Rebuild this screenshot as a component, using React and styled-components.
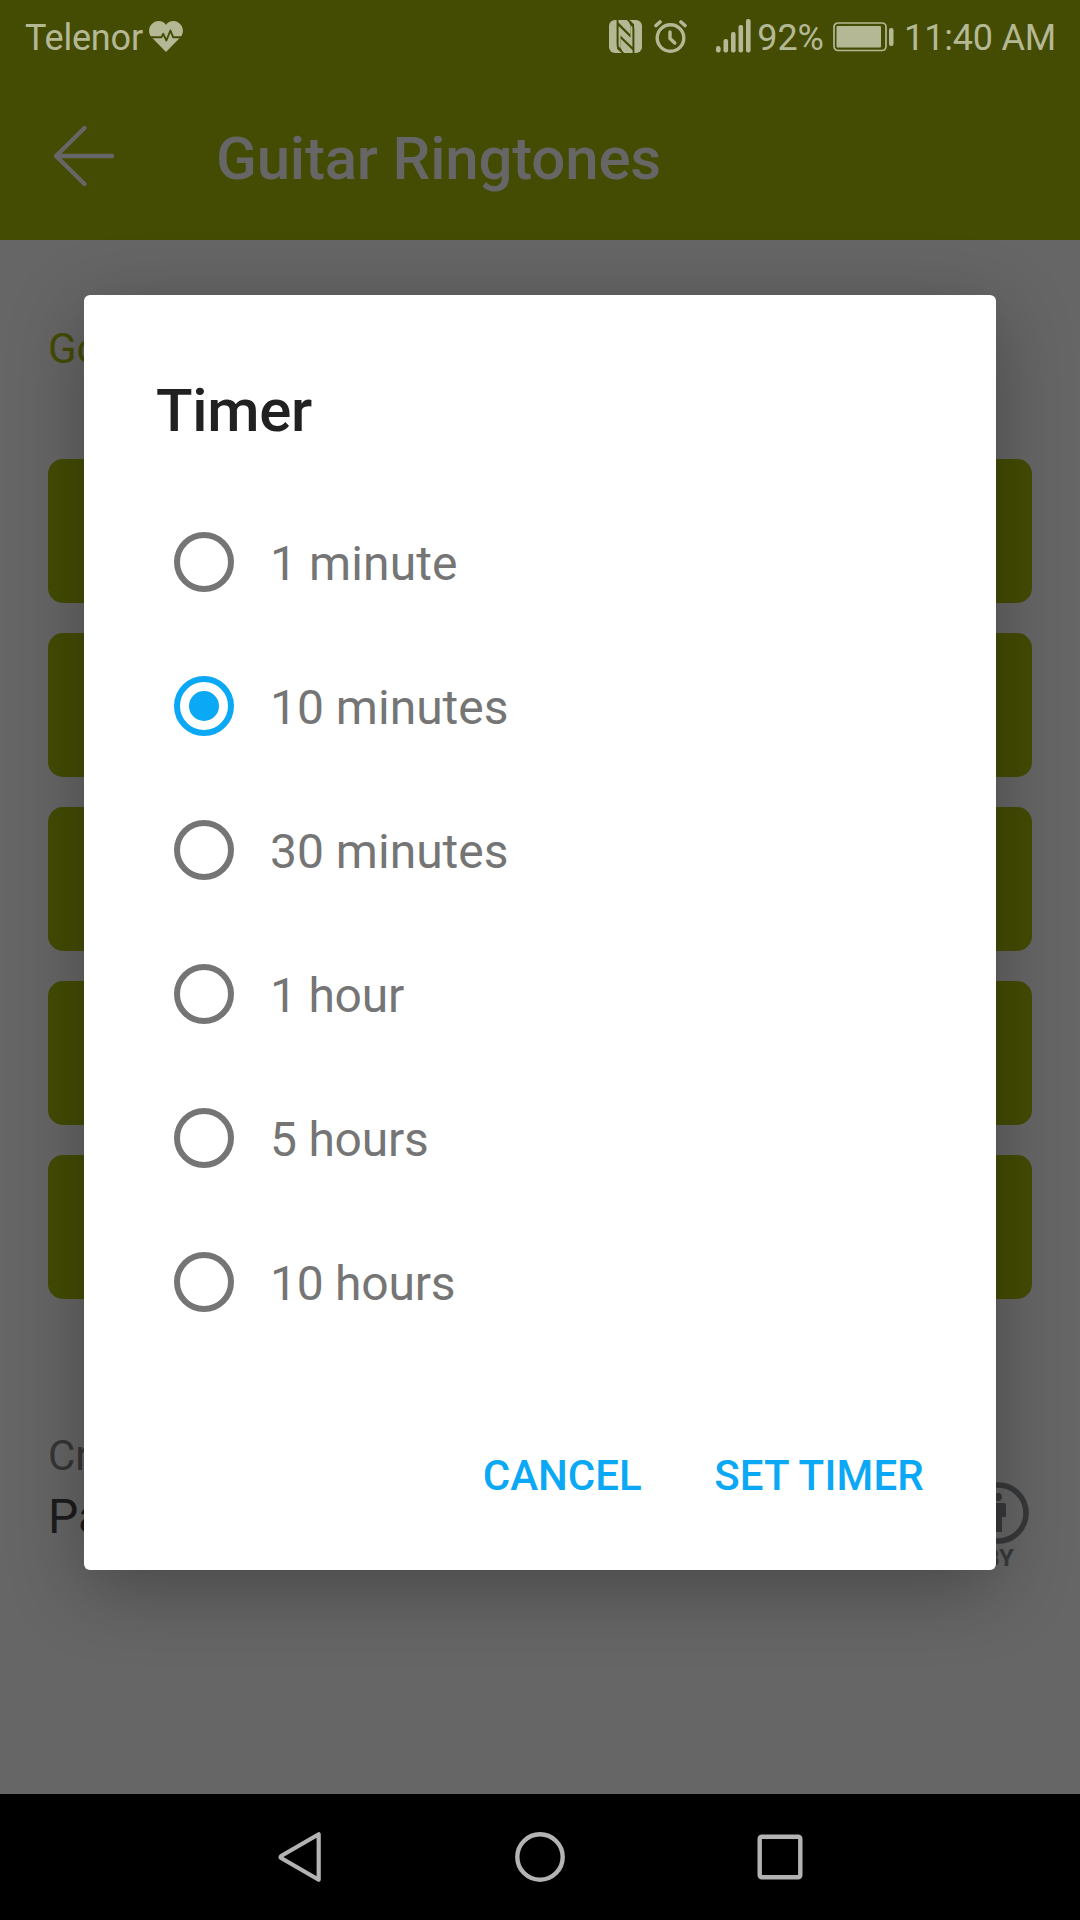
import React, { useState } from "react";
import styled, { createGlobalStyle } from "styled-components";

const GlobalStyle = createGlobalStyle`
  * { box-sizing: border-box; }
  html, body { margin: 0; padding: 0; }
  body { font-family: Roboto, "Liberation Sans", sans-serif; background: #666; }
  button { font: inherit; border: 0; padding: 0; background: none; }
`;

const Screen = styled.div`
  position: relative;
  display: flex;
  flex-direction: column;
  width: 1080px;
  height: 1920px;
  overflow: hidden;
  background: #666666;
`;

const StatusBar = styled.div`
  display: flex;
  justify-content: space-between;
  height: 76px;
  padding: 0 24px 0 25px;
  background: #444c04;
  color: #b4b894;
  font-size: 36px;
  line-height: 76px;
  letter-spacing: -0.2px;
  white-space: pre;
`;

const StatusGroup = styled.div`
  display: flex;
  align-items: center;
`;

const Glyph = styled.svg`
  display: block;
  flex: none;
  margin-left: ${(p) => p.$before || 0}px;
  margin-right: ${(p) => p.$after || 0}px;
  margin-bottom: ${(p) => p.$lift || 0}px;
`;

const Toolbar = styled.header`
  display: flex;
  align-items: center;
  height: 164px;
  padding-left: 50px;
  background: #444c04;
`;

const BackButton = styled.button`
  display: flex;
  width: 166px;
  height: 72px;
  margin-top: -4px;
`;

const Title = styled.h1`
  margin: 1px 0 0;
  font-size: 60px;
  font-weight: 500;
  line-height: 72px;
  letter-spacing: -0.2px;
  color: #666666;
`;

const Content = styled.main`
  flex: 1;
  display: flex;
  flex-direction: column;
  padding: 84px 48px 0;
`;

const SectionLink = styled.div`
  height: 135px;
  font-size: 42px;
  line-height: 50px;
  color: #444c04;
`;

const ActionList = styled.div`
  display: flex;
  flex-direction: column;
  gap: 30px;
`;

const ActionBlock = styled.div`
  height: 144px;
  border-radius: 15px;
  background: #444c04;
`;

const Credits = styled.footer`
  display: flex;
  justify-content: space-between;
  margin-top: 131px;
`;

const CreditText = styled.div`
  display: flex;
  flex-direction: column;
  padding-top: 1px;
`;

const CreditLabel = styled.span`
  font-size: 42px;
  line-height: 50px;
  color: #363636;
`;

const CreditName = styled.span`
  margin-top: 8px;
  font-size: 48px;
  line-height: 56px;
  color: #1c1c1c;
`;

const License = styled.div`
  display: flex;
  flex-direction: column;
  align-items: center;
  width: 62px;
  margin: 52px 3px 0 0;
`;

const LicenseName = styled.span`
  padding-left: 2px;
  font-size: 24px;
  font-weight: 700;
  line-height: 28px;
  color: #38393b;
`;

const NavBar = styled.nav`
  display: grid;
  grid-template-columns: 240px 240px 240px;
  justify-content: center;
  align-items: center;
  justify-items: center;
  height: 126px;
  background: #000;
`;

const Overlay = styled.div`
  position: absolute;
  inset: 0 0 126px;
  display: flex;
  align-items: flex-start;
  justify-content: center;
  padding-top: 295px;
`;

const Dialog = styled.section`
  display: flex;
  flex-direction: column;
  width: 912px;
  height: 1275px;
  padding: 76px 60px 0 72px;
  border-radius: 6px;
  background: #fff;
  box-shadow: 0 18px 76px rgba(0, 0, 0, 0.3);
`;

const DialogTitle = styled.h2`
  margin: 0;
  font-size: 60px;
  font-weight: 500;
  line-height: 80px;
  letter-spacing: -0.3px;
  color: #212121;
`;

const Options = styled.div`
  display: flex;
  flex-direction: column;
  margin-top: 40px;
`;

const Option = styled.label`
  display: flex;
  align-items: center;
  gap: 36px;
  height: 144px;
  padding-left: 18px;
  font-size: 48px;
  letter-spacing: ${(p) => p.$tracking}px;
  color: #757575;
`;

const Radio = styled.span`
  display: flex;
  align-items: center;
  justify-content: center;
  width: 60px;
  height: 60px;
  margin-bottom: 2px;
  border: 6px solid ${(p) => (p.$checked ? "#0ba8f5" : "#757575")};
  border-radius: 50%;

  &::after {
    content: "";
    width: 30px;
    height: 30px;
    border-radius: 50%;
    background: ${(p) => (p.$checked ? "#0ba8f5" : "transparent")};
  }
`;

const Actions = styled.div`
  display: flex;
  justify-content: flex-end;
  gap: 72.5px;
  margin-top: 96px;
  padding-right: 12px;
`;

const TextButton = styled.button`
  font-size: 42px;
  font-weight: 500;
  line-height: 50px;
  letter-spacing: ${(p) => p.$tracking || 0}px;
  color: #0ba8f5;
`;

const choices = [
  { label: "1 minute", tracking: 0.1 },
  { label: "10 minutes", tracking: 0 },
  { label: "30 minutes", tracking: 0 },
  { label: "1 hour", tracking: -0.25 },
  { label: "5 hours", tracking: -0.25 },
  { label: "10 hours", tracking: -0.25 },
];

export default function App() {
  const [selected, setSelected] = useState("10 minutes");
  return (
    <>
      <GlobalStyle />
      <Screen>
        <StatusBar>
          <StatusGroup>
            Telenor
            <Glyph width="34" height="31" viewBox="0 0 34 31" $before={6} $lift={3}>
              <path fill="#b4b894" d="M17 31 1.8 15.4C-3 8 3 0 9.500 0c3.500 0 6 1.500 7.500 4C18.500 1.500 21 0 24.500 0 31 0 37 8 32.200 15.400Z" />
              <path fill="none" stroke="#444c04" strokeWidth="1.900" strokeLinejoin="round" d="M1 16.200h11.500l1.700-3.400 3.200 6.700 4-10 2.700 6.700H33" />
            </Glyph>
          </StatusGroup>
          <StatusGroup>
            <Glyph width="33" height="33" viewBox="0 0 33 33" $after={12} $lift={3}>
              <rect width="33" height="33" rx="6" fill="#b4b894" />
              <path fill="none" stroke="#444c04" strokeWidth="1.800" d="M8.500 0v24q0 6 6 9M24.500 33V9q0-6-6-9" />
              <path fill="#444c04" d="M8 1 21.500 14.500v-9L19.500 1.500 25 4v27.500L11.500 18.500v9l2 4L8 29Z" />
              <path fill="#b4b894" d="M9.600 6 23.400 19.500v7.500L11.500 15.500v13L9.600 26ZM21.500 5l1.900 2.500v13l-1.900-2Z" />
            </Glyph>
            <Glyph width="33" height="33" viewBox="0 0 33 33" $after={29.5} $lift={3} fill="none" stroke="#b4b894" strokeLinecap="round">
              <circle cx="16.500" cy="18" r="13.300" strokeWidth="3.400" />
              <path strokeWidth="3.600" d="M2 5.500 6 2M31 5.500 27 2" />
              <path strokeWidth="3.400" strokeLinejoin="round" d="M16 12v6.500l4.800 4.500" />
            </Glyph>
            <Glyph width="35" height="34" viewBox="0 0 35 34" $after={6} $lift={4} fill="#b4b894">
              <rect x="0" y="27" width="4.600" height="6.500" rx="2.200" />
              <rect x="7.500" y="20" width="4.600" height="13.500" rx="2" />
              <rect x="15" y="13" width="4.600" height="20.500" rx="2" />
              <rect x="22.500" y="6" width="4.600" height="27.500" rx="2" />
              <rect x="30" y="0" width="4.600" height="33.500" rx="2" />
            </Glyph>
            92%
            <Glyph width="61" height="30" viewBox="0 0 61 30" $before={9} $after={10.5} $lift={2} fill="#b4b894">
              <rect x="1" y="1" width="52" height="27.500" rx="4" fill="none" stroke="#b4b894" strokeWidth="1.700" />
              <rect x="3.500" y="4" width="44.500" height="21.500" rx="1" />
              <rect x="56" y="6" width="4.500" height="18" rx="2" />
            </Glyph>
            11:40 AM
          </StatusGroup>
        </StatusBar>

        <Toolbar>
          <BackButton aria-label="Back">
            <Glyph width="68" height="72" viewBox="0 0 68 72" fill="none" stroke="#666666" strokeWidth="4.400" strokeLinecap="round" strokeLinejoin="round">
              <path d="M62 36H6M34.500 8 6 36l28.500 28" />
            </Glyph>
          </BackButton>
          <Title>Guitar Ringtones</Title>
        </Toolbar>

        <Content>
          <SectionLink>Go</SectionLink>
          <ActionList>
            {[0, 1, 2, 3, 4].map((n) => (
              <ActionBlock key={n} />
            ))}
          </ActionList>
          <Credits>
            <CreditText>
              <CreditLabel>Cr</CreditLabel>
              <CreditName>Pa</CreditName>
            </CreditText>
            <License>
              <Glyph width="62" height="62" viewBox="0 0 62 62" fill="#38393b">
                <circle cx="31" cy="31" r="28" fill="none" stroke="#38393b" strokeWidth="5.600" />
                <circle cx="31" cy="15" r="4" />
                <path d="M25 21h12q2 0 2 2v12h-4v15h-8V35h-4V23q0-2 2-2Z" />
              </Glyph>
              <LicenseName>BY</LicenseName>
            </License>
          </Credits>
        </Content>

        <NavBar>
          <Glyph width="46" height="60" viewBox="0 0 46 60" fill="none" stroke="#b3b3b3" strokeWidth="4.200" strokeLinejoin="round">
            <path d="M41.700 7.200v45.600L4.500 31.300q-2-1.300 0-2.600Z" />
          </Glyph>
          <Glyph width="50" height="50" viewBox="0 0 50 50" fill="none" stroke="#b3b3b3" strokeWidth="4.400">
            <circle cx="25" cy="25" r="22.700" />
          </Glyph>
          <Glyph width="46" height="46" viewBox="0 0 46 46" fill="none" stroke="#b3b3b3" strokeWidth="4.400">
            <rect x="2.700" y="2.700" width="40.600" height="40.600" rx="2" />
          </Glyph>
        </NavBar>

        <Overlay>
          <Dialog role="dialog" aria-label="Timer">
            <DialogTitle>Timer</DialogTitle>
            <Options role="radiogroup">
              {choices.map((c) => (
                <Option key={c.label} $tracking={c.tracking} onClick={() => setSelected(c.label)}>
                  <Radio $checked={selected === c.label} />
                  {c.label}
                </Option>
              ))}
            </Options>
            <Actions>
              <TextButton>CANCEL</TextButton>
              <TextButton $tracking={0.2}>SET TIMER</TextButton>
            </Actions>
          </Dialog>
        </Overlay>
      </Screen>
    </>
  );
}
